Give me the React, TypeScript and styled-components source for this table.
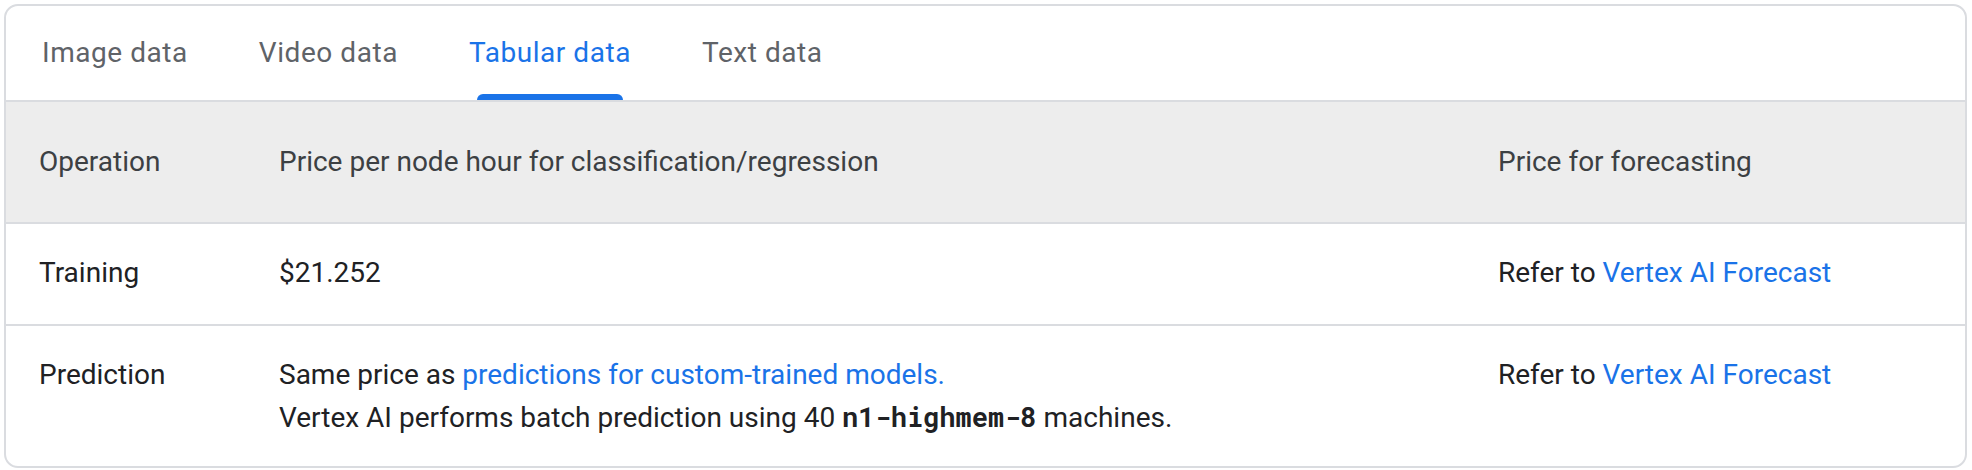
import React, { useState } from 'react';
import styled, { createGlobalStyle, css } from 'styled-components';

const GlobalStyle = createGlobalStyle`
  html, body {
    margin: 0;
    padding: 0;
    background: #ffffff;
  }
  body {
    font-family: Roboto, 'Liberation Sans', Arial, sans-serif;
    color: #202124;
  }
`;

const Page = styled.div`
  padding: 4px 5px 4px 4px;
`;

const Card = styled.div`
  border: 2px solid #dadce0;
  border-radius: 14px;
  overflow: hidden;
  background: #ffffff;
`;

const TabBar = styled.div`
  display: flex;
  height: 94px;
  border-bottom: 2px solid #dadce0;
`;

const Tab = styled.button<{ active: boolean }>`
  display: flex;
  align-items: center;
  height: 100%;
  padding: 0 35px 0 36px;
  margin: 0;
  border: none;
  background: none;
  cursor: pointer;
  font-family: Roboto, 'Liberation Sans', Arial, sans-serif;
  font-size: 28px;
  font-weight: 400;
  letter-spacing: 0.55px;
  color: #5f6368;
  span {
    position: relative;
    display: inline-block;
    height: 100%;
    line-height: 94px;
  }
  ${(props) =>
    props.active &&
    css`
      color: #1a73e8;
      span::after {
        content: '';
        position: absolute;
        left: 8px;
        right: 8px;
        bottom: 0;
        height: 6px;
        border-radius: 6px 6px 0 0;
        background: #1a73e8;
      }
    `}
`;

const Row = styled.div<{ head?: boolean }>`
  display: grid;
  grid-template-columns: 240px 1219px 1fr;
  font-size: 28px;
  line-height: 42px;
  & + & {
    border-top: 2px solid #dadce0;
  }
  ${(props) =>
    props.head
      ? css`
          background: #ededed;
          color: #3c4043;
          padding: 39px 0;
        `
      : css`
          padding: 28px 0 30px;
          &:last-child {
            padding-bottom: 27px;
          }
        `}
`;

const Cell = styled.div`
  padding: 0 32px 0 33px;
`;

const Link = styled.a`
  color: #1a73e8;
  text-decoration: none;
`;

const Code = styled.code`
  font-family: 'Roboto Mono', 'DejaVu Sans Mono', 'Liberation Mono', monospace;
  font-weight: 700;
  font-size: 27px;
  color: #202124;
`;

const tabs = ['Image data', 'Video data', 'Tabular data', 'Text data'];

export default function App() {
  const [current, setCurrent] = useState(2);

  return (
    <Page>
      <GlobalStyle />
      <Card>
        <TabBar>
          {tabs.map((tab, index) => (
            <Tab key={tab} active={index === current} onClick={() => setCurrent(index)}>
              <span>{tab}</span>
            </Tab>
          ))}
        </TabBar>
        <Row head>
          <Cell>Operation</Cell>
          <Cell>Price per node hour for classification/regression</Cell>
          <Cell>Price for forecasting</Cell>
        </Row>
        <Row>
          <Cell>Training</Cell>
          <Cell>$21.252</Cell>
          <Cell>
            Refer to <Link href="#">Vertex AI Forecast</Link>
          </Cell>
        </Row>
        <Row>
          <Cell>Prediction</Cell>
          <Cell>
            Same price as <Link href="#">predictions for custom-trained models.</Link>
            <br />
            Vertex AI performs batch prediction using 40 <Code>n1-highmem-8</Code> machines.
          </Cell>
          <Cell>
            Refer to <Link href="#">Vertex AI Forecast</Link>
          </Cell>
        </Row>
      </Card>
    </Page>
  );
}
